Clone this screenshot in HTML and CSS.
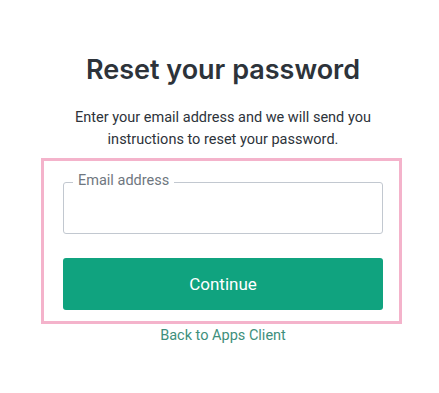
FILE: index.html
```html
<!DOCTYPE html>
<html>
<head>
<meta charset="utf-8">
<link rel="stylesheet" href="styles.css">
</head>
<body>
<main class="page">
  <h1 class="title">Reset your password</h1>
  <p class="desc">Enter your email address and we will send you instructions to reset your password.</p>
  <form class="form">
    <div class="field">
      <span class="label">Email address</span>
    </div>
    <button type="button" class="btn">Continue</button>
  </form>
  <a class="back" href="#">Back to Apps Client</a>
</main>
</body>
</html>
```
FILE: styles.css
```css
html, body {
  margin: 0;
  background: #ffffff;
}
body {
  font-family: Roboto, "Noto Sans", sans-serif;
  color: #2d333a;
}
.page {
  display: flex;
  flex-direction: column;
  align-items: center;
  padding-top: 51px;
  padding-left: 4px;
}
.title {
  margin: 0 0 0 3px;
  font-family: Inter, "Noto Sans", sans-serif;
  font-size: 27px;
  font-weight: 600;
  line-height: 38px;
  color: #2d333a;
  letter-spacing: 0;
}
.desc {
  margin: 18px 0 0 3px;
  width: 310px;
  text-align: center;
  font-size: 14.5px;
  line-height: 22px;
  color: #2d333a;
}
.form {
  margin-top: 7px;
  width: 320px;
  padding: 21px 16px 11px 19px;
  border: 3px solid #f4b3cb;
  display: flex;
  flex-direction: column;
  gap: 24px;
}
.field {
  position: relative;
  height: 52px;
  box-sizing: border-box;
  border: 1px solid #c2c8d0;
  border-radius: 3px;
}
.label {
  position: absolute;
  left: 9px;
  top: -12px;
  padding: 0 5px;
  background: #ffffff;
  font-size: 14.5px;
  line-height: 20px;
  color: #6f7780;
}
.btn {
  height: 52px;
  border: none;
  border-radius: 3px;
  background: #10a37f;
  color: #ffffff;
  font-family: Roboto, "Noto Sans", sans-serif;
  font-size: 17px;
  cursor: pointer;
}
.back {
  margin: 2px 0 0 3px;
  font-size: 14.5px;
  line-height: 20px;
  color: #3e8f7c;
  text-decoration: none;
}
```
